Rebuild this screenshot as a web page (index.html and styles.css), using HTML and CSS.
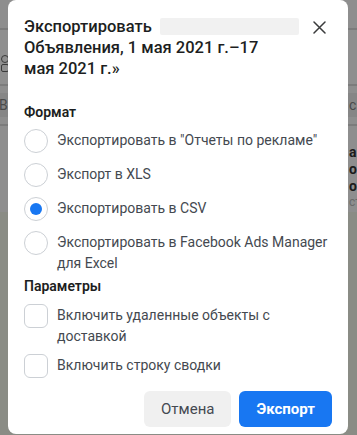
FILE: index.html
```html
<!DOCTYPE html>
<html lang="ru">
<head>
  <meta charset="UTF-8" />
  <meta name="viewport" content="width=device-width, initial-scale=1.0" />
  <title>Экспорт</title>
  <link rel="stylesheet" href="styles.css">
</head>
<body>
  <!-- dimmed page behind the dialog -->
  <div class="page">
    <div class="band band-top"></div>
    <div class="band band-line"></div>
    <div class="band band-row"><span class="mini mini-radio"></span><span class="mini mini-box"></span></div>
    <div class="band band-line"></div>
    <div class="band band-gap"></div>
    <div class="band band-head"><span class="edge-l">В</span><span class="edge-r">с</span></div>
    <div class="band band-gap"></div>
    <div class="band band-line"></div>
    <div class="band band-cell"><span class="edge-r strong">а<br>ои<br>ос</span><span class="edge-r faint">ст</span></div>
    <div class="band band-rest"></div>
  </div>

  <div class="dialog">
    <div class="dialog-header">
      <h2 class="dialog-title">Экспортировать<span class="redacted"></span><br>Объявления, 1 мая 2021 г.–17<br>мая 2021 г.»</h2>
      <button class="close" aria-label="Закрыть">
        <svg width="13" height="13" viewBox="0 0 13 13"><path d="M1 1L12 12M12 1L1 12" stroke="#3a3b3c" stroke-width="1.5" stroke-linecap="round"/></svg>
      </button>
    </div>

    <div class="section">
      <div class="section-title">Формат</div>
      <div class="choices">
        <label class="choice"><span class="radio"></span><span class="choice-text">Экспортировать в "Отчеты по рекламе"</span></label>
        <label class="choice"><span class="radio"></span><span class="choice-text">Экспорт в XLS</span></label>
        <label class="choice"><span class="radio checked"></span><span class="choice-text">Экспортировать в CSV</span></label>
        <label class="choice"><span class="radio"></span><span class="choice-text">Экспортировать в Facebook Ads Manager для Excel</span></label>
      </div>
    </div>

    <div class="section params">
      <div class="section-title">Параметры</div>
      <div class="choices tight">
        <label class="choice"><span class="box"></span><span class="choice-text">Включить удаленные объекты с<br>доставкой</span></label>
        <label class="choice"><span class="box"></span><span class="choice-text">Включить строку сводки</span></label>
      </div>
    </div>

    <div class="dialog-footer">
      <button class="btn btn-cancel">Отмена</button>
      <button class="btn btn-primary">Экспорт</button>
    </div>
  </div>
</body>
</html>
```

FILE: styles.css
```css
body {
  margin: 0;
  font-family: Roboto, "Liberation Sans", sans-serif;
  background: #8a8c85;
  height: 435px;
  overflow: hidden;
}

.page {
  display: flex;
  flex-direction: column;
}

.band {
  position: relative;
  font-size: 14px;
  color: #2a2a2a;
}

.band-top { height: 28px; background: #8e8e8e; }
.band-line { height: 2px; background: #7c7c7c; }
.band-row { height: 54px; background: #8f8f8f; }
.band-gap { height: 7px; background: #8e8e8e; }
.band-head { height: 24px; background: #868686; }
.band-cell { height: 86px; background: #8e8e8e; }
.band-rest { flex: 1; background: #8a8c85; }

.mini {
  position: absolute;
  left: 1px;
  width: 6px;
  height: 6px;
  border: 1px solid #3a3a3a;
}

.mini-radio { top: 25px; border-radius: 50%; }
.mini-box { top: 34px; border-radius: 2px; }

.edge-l, .edge-r {
  position: absolute;
  top: 3px;
  line-height: 18px;
  color: #4a4a4a;
}

.edge-l { left: -1px; }
.edge-r { left: 349px; }

.edge-r.strong {
  top: 18px;
  line-height: 17px;
  color: #1c1c1c;
  font-weight: 700;
}

.edge-r.faint {
  top: 69px;
  font-size: 12px;
  line-height: 14px;
  color: #6a6a6a;
}

.dialog {
  position: fixed;
  top: 0;
  left: 8px;
  width: 340px;
  height: 434px;
  box-sizing: border-box;
  background: #fff;
  border-radius: 8px;
  padding: 16px 16px 0;
  display: flex;
  flex-direction: column;
}

.dialog-header {
  display: flex;
  justify-content: space-between;
  align-items: flex-start;
}

.dialog-title {
  margin: 0;
  font-size: 16.5px;
  font-weight: 500;
  line-height: 21px;
  color: #1c1e21;
}

.redacted {
  display: inline-block;
  width: 139px;
  height: 17px;
  margin-left: 8px;
  vertical-align: -3px;
  background: #f1f1f1;
  border-radius: 2px;
}

.close {
  border: none;
  background: none;
  padding: 0;
  margin: 5px 6px 0 0;
  width: 13px;
  height: 13px;
  cursor: pointer;
}

.close svg { display: block; }

.section { margin-top: 23px; }
.section.params { margin-top: 3px; }

.section-title {
  font-size: 14px;
  font-weight: 600;
  line-height: 20px;
  color: #1c1e21;
  margin-bottom: 7px;
}

.params .section-title { margin-bottom: 8px; }

.choices {
  display: flex;
  flex-direction: column;
  gap: 10px;
}

.choices.tight { gap: 8px; }

.choice {
  display: flex;
  align-items: flex-start;
  gap: 9px;
  cursor: pointer;
}

.choice-text {
  font-size: 14px;
  line-height: 20.5px;
  color: #444950;
  padding-top: 1px;
}

.radio, .box {
  flex: none;
  width: 24px;
  height: 24px;
  box-sizing: border-box;
  border: 1px solid #ccd0d5;
  background: #fff;
}

.radio {
  border-radius: 50%;
  display: flex;
  align-items: center;
  justify-content: center;
}

.radio.checked::after {
  content: "";
  width: 12px;
  height: 12px;
  border-radius: 50%;
  background: #1877f2;
}

.box { border-radius: 6px; }

.dialog-footer {
  margin-top: auto;
  margin-bottom: 7px;
  display: flex;
  justify-content: flex-end;
  gap: 8px;
}

.btn {
  height: 36px;
  padding: 0 17px;
  border: none;
  border-radius: 6px;
  font-family: inherit;
  font-size: 15px;
  cursor: pointer;
}

.btn-cancel {
  background: #f0f0f0;
  color: #444950;
  font-weight: 400;
}

.btn-primary {
  background: #1877f2;
  color: #fff;
  font-weight: 700;
}
```
